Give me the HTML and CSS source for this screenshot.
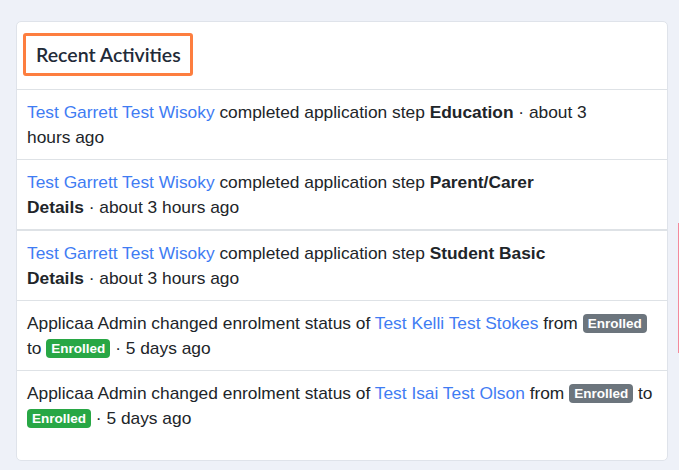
FILE: index.html
```html
<!DOCTYPE html>
<html lang="en">
<head>
<meta charset="utf-8">
<title>Recent Activities</title>
<link rel="stylesheet" href="styles.css">
</head>
<body>
<div class="page">
  <section class="card">
    <header class="card-header">
      <h5 class="card-title">Recent Activities</h5>
    </header>
    <ul class="activity-list">
      <li class="activity activity-step"><a href="#">Test Garrett Test Wisoky</a> completed application step <strong>Education</strong> · about 3 hours ago</li>
      <li class="activity activity-step activity-thick"><a href="#">Test Garrett Test Wisoky</a> completed application step <strong>Parent/Carer Details</strong> · about 3 hours ago</li>
      <li class="activity activity-step"><a href="#">Test Garrett Test Wisoky</a> completed application step <strong>Student Basic Details</strong> · about 3 hours ago</li>
      <li class="activity">Applicaa Admin changed enrolment status of <a href="#">Test Kelli Test Stokes</a> from <span class="badge badge-secondary">Enrolled</span> to <span class="badge badge-success">Enrolled</span> · 5 days ago</li>
      <li class="activity">Applicaa Admin changed enrolment status of <a href="#">Test Isai Test Olson</a> from <span class="badge badge-secondary">Enrolled</span> to <span class="badge badge-success">Enrolled</span> · 5 days ago</li>
    </ul>
  </section>
  <aside class="side">
    <div class="side-accent"></div>
  </aside>
</div>
</body>
</html>
```

FILE: styles.css
```css
html, body {
  margin: 0;
  padding: 0;
}

body {
  background: #eef1f8;
  font-family: "Liberation Sans", Arial, sans-serif;
  font-size: 17.35px;
  color: #212529;
  overflow: hidden;
}

.page {
  display: flex;
  align-items: flex-start;
  gap: 10px;
  padding: 21px 0 0 16px;
}

.card {
  flex: 0 0 652px;
  box-sizing: border-box;
  background: #ffffff;
  border: 1px solid #dfe3ea;
  border-radius: 5px;
  padding-bottom: 20px;
}

.card-header {
  padding: 11px 6px 13px;
  border-bottom: 1px solid #dee2e6;
  display: flex;
}

.card-title {
  margin: 0;
  font-family: Lato, "Liberation Sans", sans-serif;
  font-weight: 600;
  font-size: 19.5px;
  line-height: 21px;
  color: #222a38;
  padding: 8px 9px 8px 10px;
  border: 3px solid #fd7e3f;
  border-radius: 3px;
}

.activity-list {
  list-style: none;
  margin: 0;
  padding: 0;
}

.activity {
  padding: 10px 10px 9px;
  line-height: 25px;
  border-bottom: 1px solid #dee2e6;
}

.activity:last-child {
  border-bottom: none;
}

.activity-step {
  padding-right: 72px;
}

.activity-thick {
  border-bottom-width: 2px;
}

.activity a {
  color: #3f7cf3;
  text-decoration: none;
}

.activity strong {
  font-weight: 700;
  color: #212529;
}

.badge {
  display: inline-block;
  font-size: 13.5px;
  font-weight: 700;
  line-height: 13px;
  color: #ffffff;
  padding: 3px 5px 3px 5px;
  border-radius: 4px;
  vertical-align: 1px;
}

.badge-secondary {
  background: #6c757d;
}

.badge-success {
  background: #28a745;
}

.side {
  flex: 1 0 auto;
  padding-top: 202px;
}

.side-accent {
  height: 130px;
  border-left: 1px solid #f48a9c;
}
```
